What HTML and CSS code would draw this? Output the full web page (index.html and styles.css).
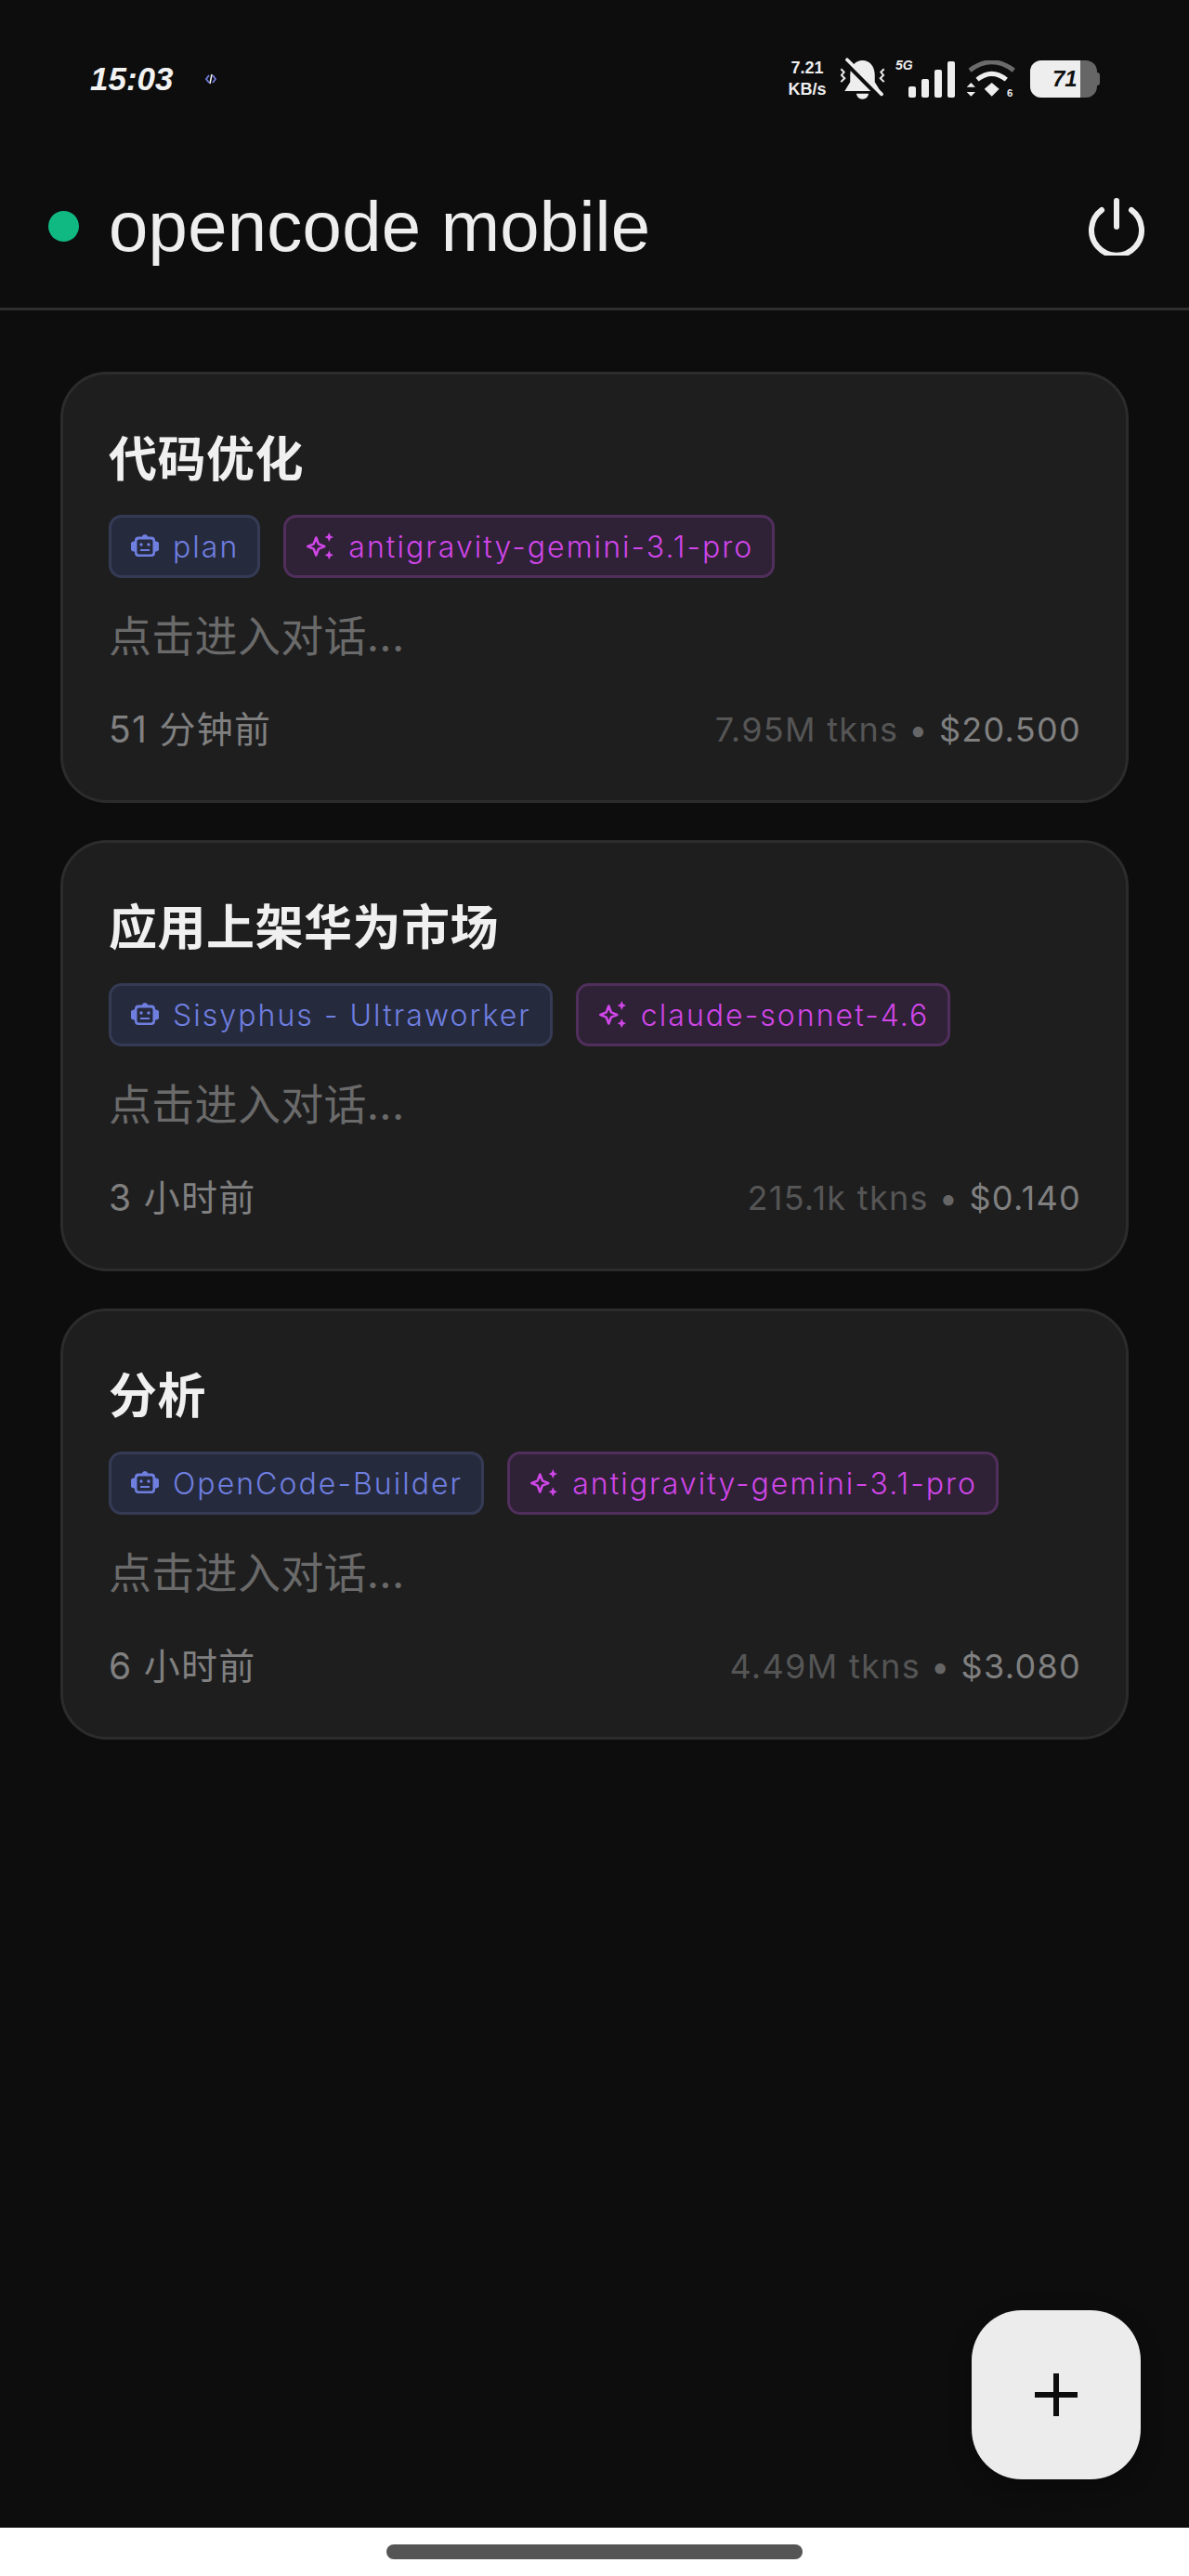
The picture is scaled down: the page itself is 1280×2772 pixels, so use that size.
FILE: index.html
```html
<!DOCTYPE html>
<html lang="zh-CN">
<head>
    <meta charset="UTF-8">
    <meta name="viewport" content="width=device-width, initial-scale=1.0">
    <title>opencode mobile</title>
    <link rel="stylesheet" href="styles.css">
</head>
<body>

<svg class="icon-defs" width="0" height="0">
    <symbol id="icon-bot" viewBox="0 0 30 30">
        <path d="M15 2a3.500 3.500 0 0 1 3.300 2.500H22a4 4 0 0 1 4 4v.8a5.700 5.700 0 0 1 0 11.400v1.300a4 4 0 0 1-4 4H8a4 4 0 0 1-4-4v-1.300a5.700 5.700 0 0 1 0-11.400v-.8a4 4 0 0 1 4-4h3.700A3.500 3.500 0 0 1 15 2z" fill="currentColor"/>
        <rect x="6.500" y="7.500" width="17" height="16" rx="2" fill="#262a3d"/>
        <circle cx="11" cy="13" r="1.700" fill="currentColor"/>
        <circle cx="19" cy="13" r="1.700" fill="currentColor"/>
        <rect x="10" y="18" width="10" height="2" fill="currentColor"/>
    </symbol>
    <symbol id="icon-sparkle" viewBox="0 0 30 30">
        <path d="M11.300 5.500l2.600 6.900 6.400 2.600-6.400 2.600-2.600 6.900-2.600-6.900L2.300 15l6.400-2.600z" fill="none" stroke="currentColor" stroke-width="2.600" stroke-linejoin="round"/>
        <path d="M25.300 0l1.500 3.500 3.200 1.500-3.200 1.500-1.500 3.500-1.500-3.500L20.600 5l3.200-1.500z" fill="currentColor"/>
        <path d="M25.300 19.300l1.500 3.500 3.200 1.500-3.200 1.500-1.500 3.500-1.500-3.500-3.200-1.500 3.200-1.500z" fill="currentColor"/>
    </symbol>
</svg>

<div class="app">
    <div class="status-bar">
        <div class="status-left">
            <span class="clock">15:03</span>
            <svg class="status-app" viewBox="0 0 12 14"><path d="M4 3L1 7l3 4M8 3l3 4-3 4" fill="none" stroke="#6f78d8" stroke-width="1.800"/><path d="M7 2L5 12" stroke="#fff" stroke-width="1.500"/></svg>
        </div>
        <div class="status-right">
            <div class="net-speed"><span>7.21</span><span>KB/s</span></div>
            <svg class="bell" viewBox="0 0 160 140">
                <path d="M80 8c-24 0-40 20-40 48v22L22 108h116l-18-30V56c0-28-16-48-40-48z" fill="#eee"/>
                <path d="M60 116h40c-2 12-11 18-20 18s-18-6-20-18z" fill="#eee"/>
                <path d="M24 10l112 112" stroke="#0d0d0e" stroke-width="21"/>
                <path d="M30 6l112 112" stroke="#eee" stroke-width="11" stroke-linecap="round"/>
                <path d="M10 36l10 10-8 10 10 10-12 12M150 36l-10 10 8 10-10 10 12 12" fill="none" stroke="#eee" stroke-width="6"/>
            </svg>
            <div class="signal">
                <span class="signal-type">5G</span>
                <i class="bar bar-1"></i>
                <i class="bar bar-2"></i>
                <i class="bar bar-3"></i>
                <i class="bar bar-4"></i>
            </div>
            <svg class="wifi" viewBox="0 0 165 120">
                <path d="M12 32C60-4 106-4 154 32" fill="none" stroke="#6b6b6b" stroke-width="15"/>
                <path d="M36 62c32-26 62-26 94 0" fill="none" stroke="#eee" stroke-width="15"/>
                <path d="M83 72l-24 20 24 24 24-24z" fill="#eee"/>
                <path d="M16 72l-14 14h28zM16 116l-14-14h28z" fill="#eee"/>
                <text x="132" y="116" class="wifi-gen">6</text>
            </svg>
            <div class="battery">
                <div class="battery-fill">71</div>
                <div class="battery-nub"></div>
            </div>
        </div>
    </div>

    <header class="top-bar">
        <div class="brand">
            <span class="status-dot"></span>
            <h1>opencode mobile</h1>
        </div>
        <svg class="power" viewBox="0 0 60 62">
            <path d="M30 3v28" />
            <path d="M14 13a27 27 0 1 0 32 0" />
        </svg>
    </header>

    <main class="session-list">
        <div class="card">
            <h2>代码优化</h2>
            <div class="chips">
                <span class="chip chip-agent"><svg><use href="#icon-bot"/></svg>plan</span>
                <span class="chip chip-model"><svg><use href="#icon-sparkle"/></svg>antigravity-gemini-3.1-pro</span>
            </div>
            <p class="preview">点击进入对话...</p>
            <div class="meta">
                <span class="time">51 分钟前</span>
                <span class="usage"><span class="tokens">7.95M tkns</span><span class="sep">•</span><span class="cost">$20.500</span></span>
            </div>
        </div>

        <div class="card">
            <h2>应用上架华为市场</h2>
            <div class="chips">
                <span class="chip chip-agent"><svg><use href="#icon-bot"/></svg>Sisyphus - Ultraworker</span>
                <span class="chip chip-model"><svg><use href="#icon-sparkle"/></svg>claude-sonnet-4.6</span>
            </div>
            <p class="preview">点击进入对话...</p>
            <div class="meta">
                <span class="time">3 小时前</span>
                <span class="usage"><span class="tokens">215.1k tkns</span><span class="sep">•</span><span class="cost">$0.140</span></span>
            </div>
        </div>

        <div class="card">
            <h2>分析</h2>
            <div class="chips">
                <span class="chip chip-agent"><svg><use href="#icon-bot"/></svg>OpenCode-Builder</span>
                <span class="chip chip-model"><svg><use href="#icon-sparkle"/></svg>antigravity-gemini-3.1-pro</span>
            </div>
            <p class="preview">点击进入对话...</p>
            <div class="meta">
                <span class="time">6 小时前</span>
                <span class="usage"><span class="tokens">4.49M tkns</span><span class="sep">•</span><span class="cost">$3.080</span></span>
            </div>
        </div>
    </main>

    <button class="fab" aria-label="new session"><i></i></button>

    <div class="nav-bar"><span></span></div>
</div>

</body>
</html>
```
FILE: styles.css
```css
* {
    box-sizing: border-box;
}
body {
    margin: 0;
    background-color: #0d0d0e;
    color: #eeeeee;
    font-family: Inter, "Noto Sans CJK SC", sans-serif;
}
.icon-defs {
    position: absolute;
}
.app {
    position: relative;
    display: flex;
    flex-direction: column;
    height: 2772px;
    overflow: hidden;
}

/* status bar */
.status-bar {
    display: flex;
    justify-content: space-between;
    align-items: center;
    height: 170px;
    padding: 0 99px 0 97px;
}
.status-left {
    display: flex;
    align-items: center;
    gap: 34px;
}
.clock {
    font-family: "Liberation Sans", sans-serif;
    font-size: 35px;
    font-weight: 700;
    font-style: italic;
    color: #f2f2f2;
}
.status-app {
    width: 12px;
    height: 14px;
}
.status-right {
    display: flex;
    align-items: center;
    height: 50px;
}
.net-speed {
    display: flex;
    flex-direction: column;
    align-items: center;
    width: 46px;
    margin-right: 10px;
    font-family: "Liberation Sans", sans-serif;
    font-size: 18px;
    font-weight: 700;
    line-height: 23px;
    color: #eee;
}
.bell {
    width: 53px;
    height: 47px;
    margin-right: 9px;
}
.signal {
    position: relative;
    display: flex;
    align-items: flex-end;
    gap: 6px;
    height: 40px;
    padding-left: 14px;
    margin-right: 12px;
}
.signal-type {
    position: absolute;
    left: 0;
    top: -3px;
    font-family: "Liberation Sans", sans-serif;
    font-size: 14px;
    font-weight: 700;
    font-style: italic;
    color: #eee;
}
.bar {
    width: 8px;
    background-color: #eee;
    border-radius: 2px;
}
.bar-1 { height: 12px; }
.bar-2 { height: 20px; }
.bar-3 { height: 30px; }
.bar-4 { height: 39px; }
.wifi {
    width: 55px;
    height: 40px;
    margin-right: 14px;
}
.wifi-gen {
    font-family: "Liberation Sans", sans-serif;
    font-size: 34px;
    font-weight: 700;
    fill: #eee;
}
.battery {
    position: relative;
    width: 72px;
    height: 40px;
    background-color: #666;
    border-radius: 12px;
}
.battery-fill {
    width: 54px;
    height: 40px;
    padding-left: 24px;
    background-color: #eee;
    border-radius: 12px 0 0 12px;
    font-family: "Liberation Sans", sans-serif;
    font-size: 24px;
    font-weight: 700;
    font-style: italic;
    line-height: 40px;
    color: #111;
}
.battery-nub {
    position: absolute;
    right: -3px;
    top: 13px;
    width: 4px;
    height: 14px;
    background-color: #666;
    border-radius: 0 3px 3px 0;
}

/* header */
.top-bar {
    display: flex;
    justify-content: space-between;
    align-items: center;
    height: 164px;
    padding: 0 48px 14px 52px;
    border-bottom: 3px solid #2e2e2e;
}
.brand {
    display: flex;
    align-items: center;
    gap: 32px;
}
.status-dot {
    width: 33px;
    height: 33px;
    border-radius: 50%;
    background-color: #10b981;
}
.brand h1 {
    margin: 0;
    font-family: "Liberation Sans", sans-serif;
    font-size: 76px;
    font-weight: 400;
    line-height: 84px;
    letter-spacing: 0.300px;
    color: #eeeeee;
}
.power {
    width: 60px;
    height: 62px;
    fill: none;
    stroke: #eeeeee;
    stroke-width: 6;
    stroke-linecap: round;
}

/* sessions */
.session-list {
    flex: 1;
    display: flex;
    flex-direction: column;
    gap: 40px;
    padding: 66px 65px 0;
}
.card {
    height: 464px;
    padding: 50px 48px 0 49px;
    background-color: #1e1e1f;
    border: 3px solid #2c2c2d;
    border-radius: 50px;
}
.card h2 {
    margin: 0;
    font-size: 52px;
    font-weight: 700;
    line-height: 84px;
    letter-spacing: 0.500px;
    color: #f0f0f0;
}
.chips {
    display: flex;
    gap: 25px;
    margin-top: 17px;
}
.chip {
    display: inline-flex;
    align-items: center;
    gap: 15px;
    height: 68px;
    padding: 0 20px 0 21px;
    border: 3px solid;
    border-radius: 14px;
    font-size: 32px;
    font-weight: 300;
    letter-spacing: 2.050px;
    white-space: nowrap;
}
.chip svg {
    width: 30px;
    height: 30px;
    flex-shrink: 0;
}
.chip-agent {
    color: #6f7fe0;
    background-color: #262a3d;
    border-color: #363b55;
}
.chip-model {
    gap: 16px;
    color: #d046e8;
    background-color: #2f2136;
    border-color: #512f5c;
}
.preview {
    margin: 30px 0 0;
    font-size: 46px;
    line-height: 64px;
    letter-spacing: 0.300px;
    color: #6a6a6a;
}
.meta {
    display: flex;
    justify-content: space-between;
    align-items: center;
    margin-top: 44px;
    font-size: 36px;
    line-height: 50px;
    letter-spacing: 1.300px;
}
.time {
    font-size: 39px;
    color: #808080;
}
.usage {
    display: flex;
    align-items: center;
}
.tokens {
    color: #555555;
}
.sep {
    margin: 0 11px;
    color: #666666;
}
.cost {
    color: #808080;
}

/* new session button */
.fab {
    position: absolute;
    left: 1046px;
    top: 2486px;
    width: 182px;
    height: 182px;
    padding: 0;
    border: none;
    border-radius: 54px;
    background-color: #ececec;
    box-shadow: 0 8px 24px rgba(0, 0, 0, 0.3);
}
.fab i {
    position: absolute;
    left: 68px;
    top: 88px;
    width: 46px;
    height: 6px;
    background-color: #0d0d0e;
}
.fab i::after {
    content: "";
    position: absolute;
    left: 20px;
    top: -20px;
    width: 6px;
    height: 46px;
    background-color: #0d0d0e;
}

/* gesture bar */
.nav-bar {
    display: flex;
    justify-content: center;
    align-items: center;
    height: 52px;
    background-color: #ffffff;
}
.nav-bar span {
    width: 448px;
    height: 16px;
    border-radius: 8px;
    background-color: #555555;
}
```
